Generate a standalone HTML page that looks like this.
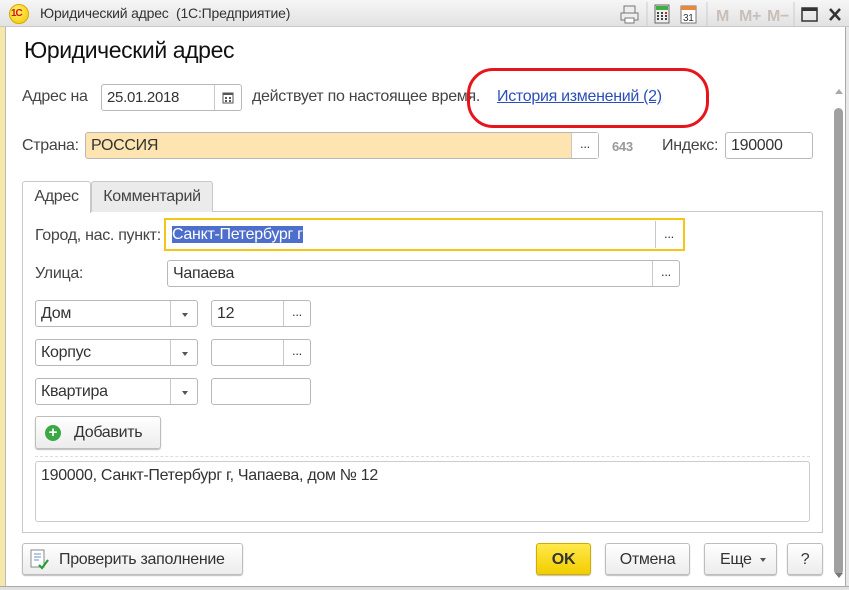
<!DOCTYPE html>
<html><head><meta charset="utf-8">
<style>
*{box-sizing:border-box;margin:0;padding:0}
body{width:849px;height:590px;overflow:hidden;background:#fff;font-family:"Liberation Sans",sans-serif;font-size:16px;color:#333;position:relative;letter-spacing:-0.3px}
.a{position:absolute}
.inp{position:absolute;border:1px solid #b8b8b8;border-radius:3px;background:#fff;height:27px;line-height:25px;padding-left:5px;color:#333}
.btn3{position:absolute;right:0;top:0;bottom:0;width:27px;border-left:1px solid #c8c8c8;text-align:center;line-height:22px;font-size:13px;color:#333}
.sel .arr{position:absolute;right:0;top:0;bottom:0;width:27px;border-left:1px solid #c8c8c8}
.sel .arr:after{content:"";position:absolute;left:11px;top:12px;border:3px solid transparent;border-top:4px solid #555}
.b{position:absolute;border:1px solid #bdbdbd;border-radius:3px;background:linear-gradient(#fff,#ececec);box-shadow:0 1px 1px #bbb;text-align:center;line-height:31px;color:#333}
.lbl{position:absolute;color:#444}
</style></head><body>
<div class="a" style="left:0;top:0;width:849px;height:590px;border:1px solid #9a9a9a;background:#fff"></div>
<div class="a" style="left:0;top:26px;width:6px;height:564px;background:#f7e7a8;border-right:1px solid #bbb"></div>
<div class="a" style="left:845px;top:26px;width:4px;height:564px;background:#e8e8e8;border-left:1px solid #aaa"></div>
<div class="a" style="left:0;top:586px;width:849px;height:4px;background:#e0e0e0;border-top:1px solid #aaa"></div>
<div class="a" style="left:0;top:0;width:849px;height:27px;background:linear-gradient(#f6f6f6,#e2e2e2);border-bottom:1px solid #c8c8c8"></div>
<div class="a" style="left:9px;top:4px;width:20px;height:20px;border-radius:50%;background:radial-gradient(circle at 40% 35%,#fff36a,#f3c400);border:1px solid #d9a800"></div>
<div class="a" style="left:11px;top:8px;font-size:10px;font-weight:bold;color:#d2141c;letter-spacing:-1px">1С</div>
<div class="a" style="left:40px;top:5px;font-size:14px;color:#333;letter-spacing:-0.2px">Юридический адрес&nbsp; (1С:Предприятие)</div>
<svg class="a" style="left:620px;top:2px" width="229" height="24">
 <g stroke="#777" fill="#eee"><rect x="4" y="4" width="11" height="8"/><rect x="1" y="11" width="17" height="7"/><rect x="5" y="16" width="9" height="5" fill="#fff"/></g>
 <line x1="27" y1="0" x2="27" y2="24" stroke="#ccc"/>
 <rect x="35" y="3" width="14" height="18" fill="#eee" stroke="#666"/><rect x="36" y="4" width="12" height="4" fill="#3cb043"/>
 <g fill="#444"><rect x="37" y="10" width="2" height="2"/><rect x="41" y="10" width="2" height="2"/><rect x="45" y="10" width="2" height="2" fill="#d22"/><rect x="37" y="13" width="2" height="2"/><rect x="41" y="13" width="2" height="2"/><rect x="45" y="13" width="2" height="2"/><rect x="37" y="16" width="2" height="2"/><rect x="41" y="16" width="2" height="2"/><rect x="45" y="16" width="2" height="2"/></g>
 <rect x="61" y="4" width="15" height="17" fill="#fff" stroke="#777"/><rect x="61" y="4" width="15" height="4" fill="#e8883a"/>
 <text x="63" y="19" font-size="10" font-family="Liberation Sans" fill="#333">31</text>
 <line x1="87" y1="0" x2="87" y2="24" stroke="#ccc"/>
 <text x="96" y="19" font-size="16" font-weight="bold" font-family="Liberation Sans" fill="#c9bfb8">M</text>
 <text x="119" y="19" font-size="16" font-weight="bold" font-family="Liberation Sans" fill="#c9bfb8">M+</text>
 <text x="147" y="19" font-size="16" font-weight="bold" font-family="Liberation Sans" fill="#c9bfb8">M−</text>
 <line x1="174" y1="0" x2="174" y2="24" stroke="#ccc"/>
 <rect x="182" y="6" width="15" height="13" fill="none" stroke="#333" stroke-width="1.5"/><rect x="182" y="6" width="15" height="3" fill="#333"/>
 <path d="M210 7 L220 18 M220 7 L210 18" stroke="#333" stroke-width="2.5"/>
</svg>
<div class="a" style="left:835px;top:89px;border:4px solid transparent;border-bottom:5px solid #aaa;border-top:0"></div>
<div class="a" style="left:834px;top:108px;width:9px;height:467px;background:#a0a0a0;border-radius:5px"></div>
<div class="a" style="left:835px;top:573px;border:4px solid transparent;border-top:5px solid #777;border-bottom:0"></div>
<div class="a" style="left:24px;top:37px;font-size:23px;color:#111;letter-spacing:-0.4px">Юридический адрес</div>
<div class="lbl" style="left:22px;top:88px">Адрес на</div>
<div class="inp" style="left:101px;top:84px;width:141px;font-size:15px">25.01.2018<div class="btn3"><svg width="12" height="13" style="margin-top:6px"><rect x="1" y="2" width="10" height="10" fill="none" stroke="#555"/><rect x="1" y="2" width="10" height="2" fill="#555"/><g fill="#555"><rect x="3" y="6" width="2" height="2"/><rect x="7" y="6" width="2" height="2"/><rect x="3" y="9" width="2" height="2"/><rect x="7" y="9" width="2" height="2"/></g></svg></div></div>
<div class="lbl" style="left:252px;top:88px">действует по настоящее время.</div>
<div class="a" style="left:497px;top:88px;color:#2a4fb8;text-decoration:underline">История изменений (2)</div>
<div class="a" style="left:467px;top:68px;width:242px;height:60px;border:3px solid #e8141c;border-radius:26px"></div>
<div class="lbl" style="left:22px;top:137px">Страна:</div>
<div class="inp" style="left:85px;top:132px;width:514px;background:#fde4b0">РОССИЯ<div class="btn3" style="background:#fff">...</div></div>
<div class="a" style="left:612px;top:139px;color:#999;font-weight:bold;font-size:13px">643</div>
<div class="lbl" style="left:662px;top:137px">Индекс:</div>
<div class="inp" style="left:725px;top:132px;width:88px">190000</div>
<div class="a" style="left:22px;top:211px;width:801px;height:322px;border:1px solid #c8c8c8"></div>
<div class="a" style="left:91px;top:181px;width:122px;height:31px;background:#ebebeb;border:1px solid #c8c8c8;border-bottom:none;border-radius:3px 3px 0 0;text-align:center;line-height:29px;color:#444">Комментарий</div>
<div class="a" style="left:22px;top:181px;width:69px;height:32px;background:#fff;border:1px solid #c8c8c8;border-bottom:none;border-radius:3px 3px 0 0;text-align:center;line-height:29px;color:#444">Адрес</div>
<div class="lbl" style="left:35px;top:227px">Город, нас. пункт:</div>
<div class="a" style="left:164px;top:218px;width:521px;height:33px;border:2px solid #f5c518"></div>
<div class="inp" style="left:166px;top:220px;width:517px;height:29px;border-color:transparent;line-height:28px"><span style="background:#4d6ecb;color:#fff">Санкт-Петербург г</span><div class="btn3" style="line-height:26px">...</div></div>
<div class="lbl" style="left:35px;top:265px">Улица:</div>
<div class="inp" style="left:167px;top:260px;width:513px">Чапаева<div class="btn3">...</div></div>
<div class="inp sel" style="left:35px;top:300px;width:163px">Дом<div class="arr"></div></div>
<div class="inp" style="left:211px;top:300px;width:100px">12<div class="btn3">...</div></div>
<div class="inp sel" style="left:35px;top:339px;width:163px">Корпус<div class="arr"></div></div>
<div class="inp" style="left:211px;top:339px;width:100px"><div class="btn3">...</div></div>
<div class="inp sel" style="left:35px;top:378px;width:163px">Квартира<div class="arr"></div></div>
<div class="inp" style="left:211px;top:378px;width:100px"></div>
<div class="b" style="left:35px;top:416px;width:126px;height:33px;text-align:left;padding-left:38px">Добавить</div>
<div class="a" style="left:45px;top:425px;width:16px;height:16px;border-radius:50%;background:#3aa845;color:#fff;font-weight:bold;font-size:15px;line-height:15px;text-align:center;letter-spacing:0">+</div>
<div class="a" style="left:35px;top:456px;width:775px;border-top:1px dashed #ddd"></div>
<div class="a" style="left:35px;top:461px;width:775px;height:61px;border:1px solid #ccc;border-radius:3px;padding:5px 5px;color:#333">190000, Санкт-Петербург г, Чапаева, дом № 12</div>
<div class="b" style="left:22px;top:543px;width:221px;height:32px;text-align:left;padding-left:36px">Проверить заполнение</div>
<svg class="a" style="left:30px;top:549px" width="20" height="22"><rect x="1" y="1" width="13" height="17" fill="#fff" stroke="#888"/><g stroke="#6a8fc9"><line x1="4" y1="5" x2="11" y2="5"/><line x1="4" y1="8" x2="11" y2="8"/><line x1="4" y1="11" x2="9" y2="11"/></g><path d="M9 16 L12 19 L18 11" stroke="#2d9b3a" stroke-width="2.2" fill="none"/></svg>
<div class="b" style="left:536px;top:543px;width:55px;height:32px;background:linear-gradient(#ffe94a,#f2cd00);border-color:#d2ad00;font-weight:bold">OK</div>
<div class="b" style="left:605px;top:543px;width:85px;height:32px">Отмена</div>
<div class="b" style="left:704px;top:543px;width:73px;height:32px;text-align:left;padding-left:15px">Еще</div>
<div class="a" style="left:760px;top:558px;border:3px solid transparent;border-top:4px solid #555"></div>
<div class="b" style="left:787px;top:543px;width:36px;height:32px">?</div>
</body></html>
